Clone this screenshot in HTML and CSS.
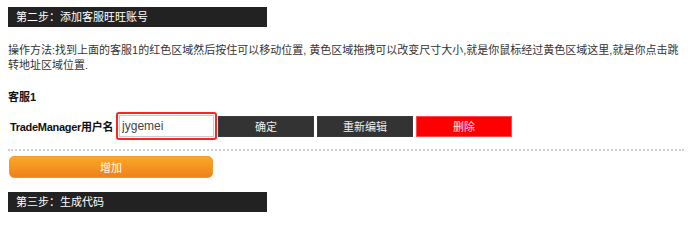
FILE: index.html
```html
<!DOCTYPE html>
<html lang="zh-CN">
<head>
<meta charset="utf-8">
<title>添加客服旺旺账号</title>
<link rel="stylesheet" href="styles.css">
</head>
<body>
<div class="page">
  <div class="step-bar">第二步：添加客服旺旺账号</div>
  <p class="desc">操作方法:找到上面的客服1的红色区域然后按住可以移动位置, 黄色区域拖拽可以改变尺寸大小,就是你鼠标经过黄色区域这里,就是你点击跳转地址区域位置.</p>
  <div class="kf-title">客服1</div>
  <div class="kf-row">
    <label class="kf-label">TradeManager用户名</label>
    <span class="input-wrap"><input class="kf-input" type="text" value="jygemei"></span>
    <button class="btn btn-dark">确定</button>
    <button class="btn btn-dark">重新编辑</button>
    <button class="btn btn-red">删除</button>
  </div>
  <div class="divider"></div>
  <button class="btn-add">增加</button>
  <div class="step-bar step-bar-next">第三步：生成代码</div>
</div>
</body>
</html>
```

FILE: styles.css
```css
html, body {
  margin: 0;
  padding: 0;
  background: #fff;
}

.page {
  padding: 7px 8px 0 8px;
  font-family: "Liberation Sans", "Noto Sans CJK SC", sans-serif;
  color: #333;
}

.step-bar {
  width: 251px;
  height: 20px;
  line-height: 20px;
  padding-left: 8px;
  background: #222;
  color: #fff;
  font-size: 11px;
}

.step-bar-next {
  margin-top: 14px;
}

.desc {
  margin: 16px 0 0 0;
  font-size: 11px;
  line-height: 15px;
  color: #333;
}

.kf-title {
  margin-top: 16px;
  font-size: 11px;
  line-height: 16px;
  font-weight: bold;
  color: #111;
}

.kf-row {
  margin-top: 7px;
  display: flex;
  align-items: center;
}

.kf-label {
  margin-left: 2px;
  font-size: 11px;
  font-weight: bold;
  letter-spacing: -0.3px;
  color: #111;
}

.input-wrap {
  margin-left: 3px;
  display: flex;
  padding: 1px;
  border: 2px solid #f22;
  border-radius: 3px;
}

.kf-input {
  box-sizing: border-box;
  width: 95px;
  height: 22px;
  margin: 0;
  padding: 0 2px;
  border: 1px solid #ccc;
  font-family: "Liberation Sans", sans-serif;
  font-size: 12px;
  color: #444;
  outline: none;
}

.btn {
  box-sizing: border-box;
  width: 96px;
  height: 21px;
  margin: 0 0 0 3px;
  padding: 0;
  border: 1px solid transparent;
  font-family: "Liberation Sans", "Noto Sans CJK SC", sans-serif;
  font-size: 11px;
  color: #eee;
  cursor: pointer;
}

.btn-dark {
  background: #333;
  border-color: #3a3a3a;
}

.kf-row .btn-dark:first-of-type {
  margin-left: 1px;
}

.btn-red {
  background: #f00;
  border-color: #ff4a4a;
  color: #fde;
}

.divider {
  margin-top: 9px;
  border-top: 2px dotted #cfcfcf;
}

.btn-add {
  display: block;
  box-sizing: border-box;
  width: 204px;
  height: 22px;
  margin: 5px 0 0 1px;
  padding: 0;
  border: 1px solid #f39a2a;
  border-radius: 5px;
  background: linear-gradient(to bottom, #fba826, #f0801c);
  font-family: "Liberation Sans", "Noto Sans CJK SC", sans-serif;
  font-size: 11px;
  color: #fff;
}
```
